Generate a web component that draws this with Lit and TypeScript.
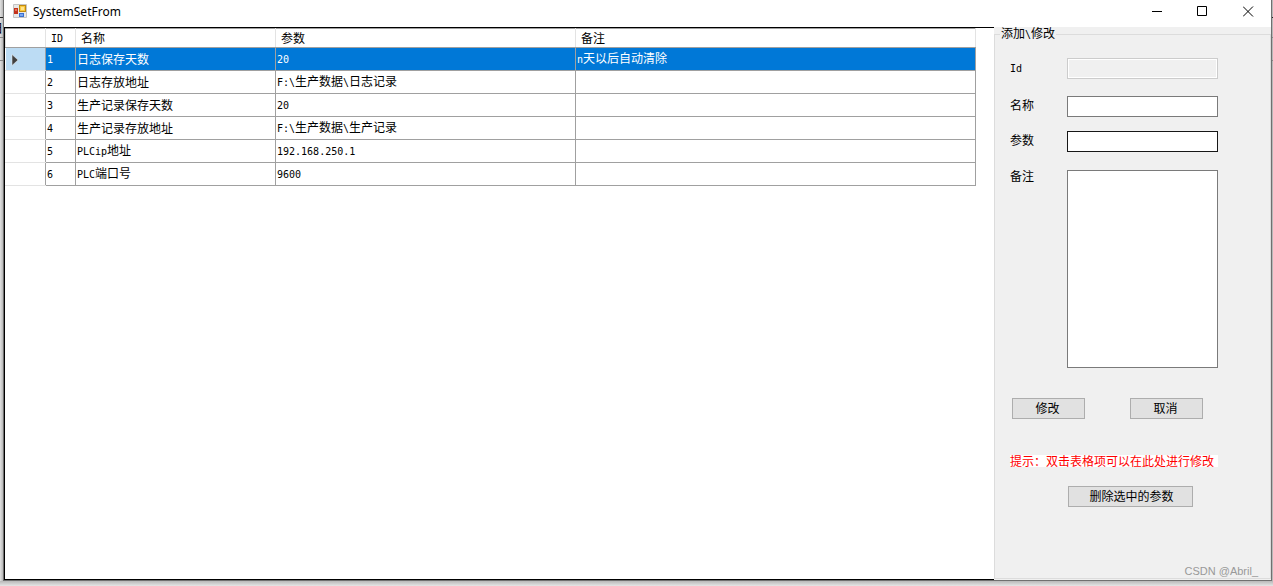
import { LitElement, html, css } from "lit";
import { customElement, state } from "lit/decorators.js";

interface Setting {
  id: number;
  name: string;
  value: string;
  note: string;
}

const SETTINGS: Setting[] = [
  { id: 1, name: "日志保存天数", value: "20", note: "n天以后自动清除" },
  { id: 2, name: "日志存放地址", value: "F:\\生产数据\\日志记录", note: "" },
  { id: 3, name: "生产记录保存天数", value: "20", note: "" },
  { id: 4, name: "生产记录存放地址", value: "F:\\生产数据\\生产记录", note: "" },
  { id: 5, name: "PLCip地址", value: "192.168.250.1", note: "" },
  { id: 6, name: "PLC端口号", value: "9600", note: "" },
];

// Half-width runs are set in a monospaced face, two characters per ideograph.
const mixed = (text: string) =>
  text
    .split(/([\x20-\x7e]+)/)
    .filter(Boolean)
    .map((run) => (/^[\x20-\x7e]/.test(run) ? html`<span class="half">${run}</span>` : run));

@customElement("app-root")
export class AppRoot extends LitElement {
  @state() private selected = 1;

  static styles = css`
    :host {
      display: block;
      height: 100vh;
      box-sizing: border-box;
      padding: 0 1px 5px 3px;
      /* the window behind: its ruled lines, then the drop shadow */
      background:
        linear-gradient(#222, #222) 0 17px / 100% 1px no-repeat,
        linear-gradient(#888, #888) 0 37px / 100% 1px no-repeat,
        linear-gradient(#888, #888) 0 60px / 100% 1px no-repeat,
        linear-gradient(to top, #e6e6e6, #b8b8b8) 0 100% / 100% 5px no-repeat,
        linear-gradient(to right, #e2e2e2, #b8b8b8 3px);
      font: 12px/16px "Noto Sans CJK SC", sans-serif;
      color: #000;
      overflow: hidden;
    }
    .half {
      font-family: "DejaVu Sans Mono", monospace;
      font-size: 10px;
    }
    .window {
      display: flex;
      flex-direction: column;
      height: 100%;
      box-sizing: border-box;
      border: solid #707070;
      border-width: 0 1px 1px;
      background: #f0f0f0;
    }
    .titlebar {
      display: flex;
      align-items: center;
      height: 27px;
      flex: none;
      padding-left: 9px;
      padding-bottom: 4px;
      box-sizing: border-box;
      background: #fff;
    }
    .titlebar h1 {
      flex: 1;
      margin: 0 0 0 5px;
      font: 12px/18px "Noto Sans", sans-serif;
    }
    .caption {
      width: 46px;
      height: 22px;
      padding: 0;
      border: 0;
      background: none;
      display: grid;
      place-items: center;
    }
    .body {
      display: flex;
      flex: 1;
      min-height: 0;
    }
    .grid {
      flex: 1;
      min-width: 0;
      border: solid #000;
      border-width: 1px 0 1px 1px;
      background: #fff;
      overflow: hidden;
    }
    table {
      border-collapse: collapse;
      table-layout: fixed;
      width: 971px;
      border-top: 1px solid #a0a0a0;
    }
    .c-head { width: 40px; }
    .c-id { width: 30px; }
    .c-name { width: 200px; }
    .c-value { width: 300px; }
    .c-note { width: 400px; }
    th, td {
      box-sizing: border-box;
      height: 23px;
      padding: 0 1px;
      border: 1px solid #a0a0a0;
      text-align: left;
      font-weight: normal;
      white-space: nowrap;
    }
    thead th {
      height: 19px;
      padding: 0 5px;
      border-color: #a0a0a0 #e3e3e3;
    }
    tbody th {
      padding: 0 0 0 5px;
      border-color: #e3e3e3 #a0a0a0 #e3e3e3 #fff;
    }
    tr.selected td {
      background: #0078d7;
      color: #fff;
    }
    tr.selected th {
      background: #bcdcf4;
    }
    .marker {
      display: block;
    }
    .side {
      width: 277px;
      flex: none;
      display: flex;
      box-sizing: border-box;
      padding-bottom: 1px;
    }
    fieldset {
      flex: 1;
      min-width: 0;
      margin: 0;
      padding: 0 0 0 15px;
      border: 1px solid #dcdcdc;
    }
    legend {
      margin-left: -10px;
      padding: 0 1px;
      line-height: 12px;
    }
    .fields {
      display: grid;
      grid-template-columns: 57px 151px;
      grid-template-rows: 38px 35px 39px 198px;
      margin-top: 17px;
    }
    .fields label {
      line-height: 18px;
    }
    .fields label.top {
      line-height: 12px;
    }
    input, textarea {
      box-sizing: border-box;
      width: 100%;
      height: 21px;
      margin: 0;
      padding: 2px;
      border: 1px solid #7a7a7a;
      border-radius: 0;
      background: #fff;
      font: inherit;
      resize: none;
      outline: none;
    }
    input:disabled {
      border-color: #ccc;
      background: #f0f0f0;
      box-shadow: inset 0 0 0 1px #fff;
    }
    input.hot {
      border-color: #171717;
    }
    textarea {
      height: 198px;
    }
    button.push {
      width: 73px;
      height: 21px;
      padding: 0 2px 2px 0;
      border: 1px solid #adadad;
      background: #e1e1e1;
      font: 12px/16px "Noto Sans CJK SC", sans-serif;
      color: #000;
    }
    .actions {
      display: flex;
      gap: 45px;
      margin: 30px 0 0 2px;
    }
    .hint {
      display: table;
      margin: 36px 0 0;
      padding: 0 4px 0 0;
      line-height: 12px;
      background: #fff;
      color: #f00;
    }
    button.wide {
      display: block;
      width: 125px;
      padding: 0 0 2px 2px;
      margin: 19px 0 0 58px;
    }
    .behind {
      position: absolute;
      left: 0;
      top: 20px;
      width: 3px;
      overflow: hidden;
      direction: rtl;
      white-space: nowrap;
    }
    .watermark {
      position: absolute;
      right: 15px;
      bottom: 7px;
      font: 11px/16px "Liberation Sans", sans-serif;
      color: #999;
    }
  `;

  render() {
    return html`
      <div class="behind" aria-hidden="true">日</div>
      <main class="window">
        <header class="titlebar">
          <svg width="15" height="15" viewBox="0 0 15 15" aria-hidden="true">
            <path d="M.5 .5h13v13h-13z" fill="#e8e8e8" stroke="#c4c4c4" />
            <rect x="1" y="4" width="4" height="6" fill="#c3331d" />
            <rect x="2" y="5" width="2" height="2" fill="#e8705a" />
            <rect x="6.5" y="1.5" width="6" height="6" fill="#fbc83c" stroke="#c08a10" />
            <rect x="8" y="3" width="3" height="3" fill="#ffe48c" />
            <rect x="6" y="9" width="5" height="4" fill="#3a6fd0" />
            <rect x="7" y="10" width="3" height="2" fill="#7ba8f0" />
          </svg>
          <h1>SystemSetFrom</h1>
          <button class="caption" aria-label="最小化">
            <svg width="11" height="11" viewBox="0 0 11 11"><path d="M1 5.5h10" stroke="#000" /></svg>
          </button>
          <button class="caption" aria-label="最大化">
            <svg width="11" height="11" viewBox="0 0 11 11"><path d="M.5 .5h9v9h-9z" fill="none" stroke="#000" /></svg>
          </button>
          <button class="caption" aria-label="关闭">
            <svg width="11" height="11" viewBox="0 0 11 11"><path d="M0 .5l10 10M10 .5l-10 10" stroke="#000" /></svg>
          </button>
        </header>
        <div class="body">
          <section class="grid">
            <table>
              <colgroup>
                <col class="c-head" /><col class="c-id" /><col class="c-name" /><col class="c-value" /><col class="c-note" />
              </colgroup>
              <thead>
                <tr>
                  <th></th>
                  <th scope="col">${mixed("ID")}</th>
                  <th scope="col">名称</th>
                  <th scope="col">参数</th>
                  <th scope="col">备注</th>
                </tr>
              </thead>
              <tbody>
                ${SETTINGS.map(
                  (s) => html`
                    <tr class=${s.id === this.selected ? "selected" : ""} @click=${() => (this.selected = s.id)}>
                      <th scope="row">
                        ${s.id === this.selected
                          ? html`<svg class="marker" width="8" height="13" viewBox="0 0 8 13">
                              <path d="M1 1.5l6 5.5-6 5.5z" fill="#404040" stroke="#f4f4f4" stroke-width="0.5" />
                            </svg>`
                          : ""}
                      </th>
                      <td>${mixed(String(s.id))}</td>
                      <td>${mixed(s.name)}</td>
                      <td>${mixed(s.value)}</td>
                      <td>${mixed(s.note)}</td>
                    </tr>
                  `
                )}
              </tbody>
            </table>
          </section>
          <aside class="side">
            <fieldset>
              <legend>${mixed("添加\\修改")}</legend>
              <div class="fields">
                <label for="id">${mixed("Id")}</label>
                <div><input id="id" disabled /></div>
                <label for="name">名称</label>
                <div><input id="name" /></div>
                <label for="value">参数</label>
                <div><input id="value" class="hot" /></div>
                <label for="note" class="top">备注</label>
                <textarea id="note"></textarea>
              </div>
              <div class="actions">
                <button class="push">修改</button>
                <button class="push">取消</button>
              </div>
              <p class="hint">提示：双击表格项可以在此处进行修改</p>
              <button class="push wide">删除选中的参数</button>
            </fieldset>
          </aside>
        </div>
      </main>
      <div class="watermark">CSDN @Abril_</div>
    `;
  }
}
